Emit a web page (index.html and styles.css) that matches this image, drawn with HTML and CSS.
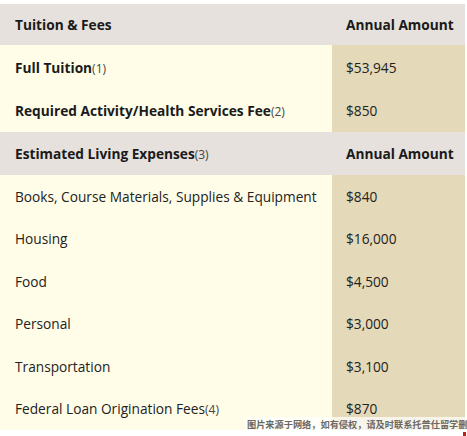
FILE: index.html
```html
<!DOCTYPE html>
<html>
<head>
<meta charset="utf-8">
<link rel="stylesheet" href="styles.css">
</head>
<body>
<div class="page">
  <table class="fees">
    <tr class="head h1">
      <th class="c1">Tuition &amp; Fees</th>
      <th class="c2">Annual Amount</th>
    </tr>
    <tr class="row r1">
      <td class="c1"><b>Full Tuition</b><span class="note">(1)</span></td>
      <td class="c2">$53,945</td>
    </tr>
    <tr class="row r2">
      <td class="c1"><b>Required Activity/Health Services Fee</b><span class="note">(2)</span></td>
      <td class="c2">$850</td>
    </tr>
    <tr class="head h2">
      <th class="c1">Estimated Living Expenses<span class="note">(3)</span></th>
      <th class="c2">Annual Amount</th>
    </tr>
    <tr class="row"><td class="c1">Books, Course Materials, Supplies &amp; Equipment</td><td class="c2">$840</td></tr>
    <tr class="row"><td class="c1">Housing</td><td class="c2">$16,000</td></tr>
    <tr class="row"><td class="c1">Food</td><td class="c2">$4,500</td></tr>
    <tr class="row"><td class="c1">Personal</td><td class="c2">$3,000</td></tr>
    <tr class="row"><td class="c1">Transportation</td><td class="c2">$3,100</td></tr>
    <tr class="row last"><td class="c1">Federal Loan Origination Fees<span class="note">(4)</span></td><td class="c2">$870</td></tr>
  </table>
  <div class="watermark">图片来源于网络，如有侵权，请及时联系托普仕留学删除</div>
  <div class="redmark"></div>
</div>
</body>
</html>
```
FILE: styles.css
```css
html, body {
  margin: 0;
  padding: 0;
  background: #ffffff;
}
.page {
  position: relative;
  width: 467px;
  height: 436px;
  padding-top: 4px;
  box-sizing: border-box;
  overflow: hidden;
}
.fees {
  width: 465px;
  border-collapse: collapse;
  table-layout: fixed;
  font-family: "Open Sans", "Noto Sans", sans-serif;
  font-size: 13.7px;
  color: #222;
}
.fees th, .fees td {
  padding: 0;
  text-align: left;
  vertical-align: middle;
  white-space: nowrap;
}
.fees .c1 {
  width: 317px;
  padding-left: 15px;
}
.fees .c2 {
  padding-left: 14px;
}
.head th {
  background: #e6e1dc;
  font-weight: 700;
  color: #1a1a1a;
}
.h1 { height: 41px; }
.h2 { height: 43px; }
.row td.c1 { background: #fffde8; }
.row td.c2 { background: #e4d9b8; }
.row { height: 42.5px; }
.r1 { height: 44px; }
.r2 { height: 43px; }
.row b { font-weight: 700; color: #1a1a1a; }
.note {
  font-size: 12px;
  font-weight: 400;
  color: #444;
}
.watermark {
  position: absolute;
  left: 245px;
  top: 417px;
  width: 222px;
  padding: 1px 0 1px 2px;
  box-sizing: border-box;
  overflow: hidden;
  background: rgba(255, 255, 255, 0.7);
  font-family: "Noto Sans CJK SC", sans-serif;
  font-size: 9.2px;
  line-height: 13px;
  font-weight: 700;
  color: #6c6864;
  white-space: nowrap;
}
.redmark {
  position: absolute;
  left: 463px;
  top: 432px;
  width: 3px;
  height: 4px;
  background: #c0201a;
}
```
